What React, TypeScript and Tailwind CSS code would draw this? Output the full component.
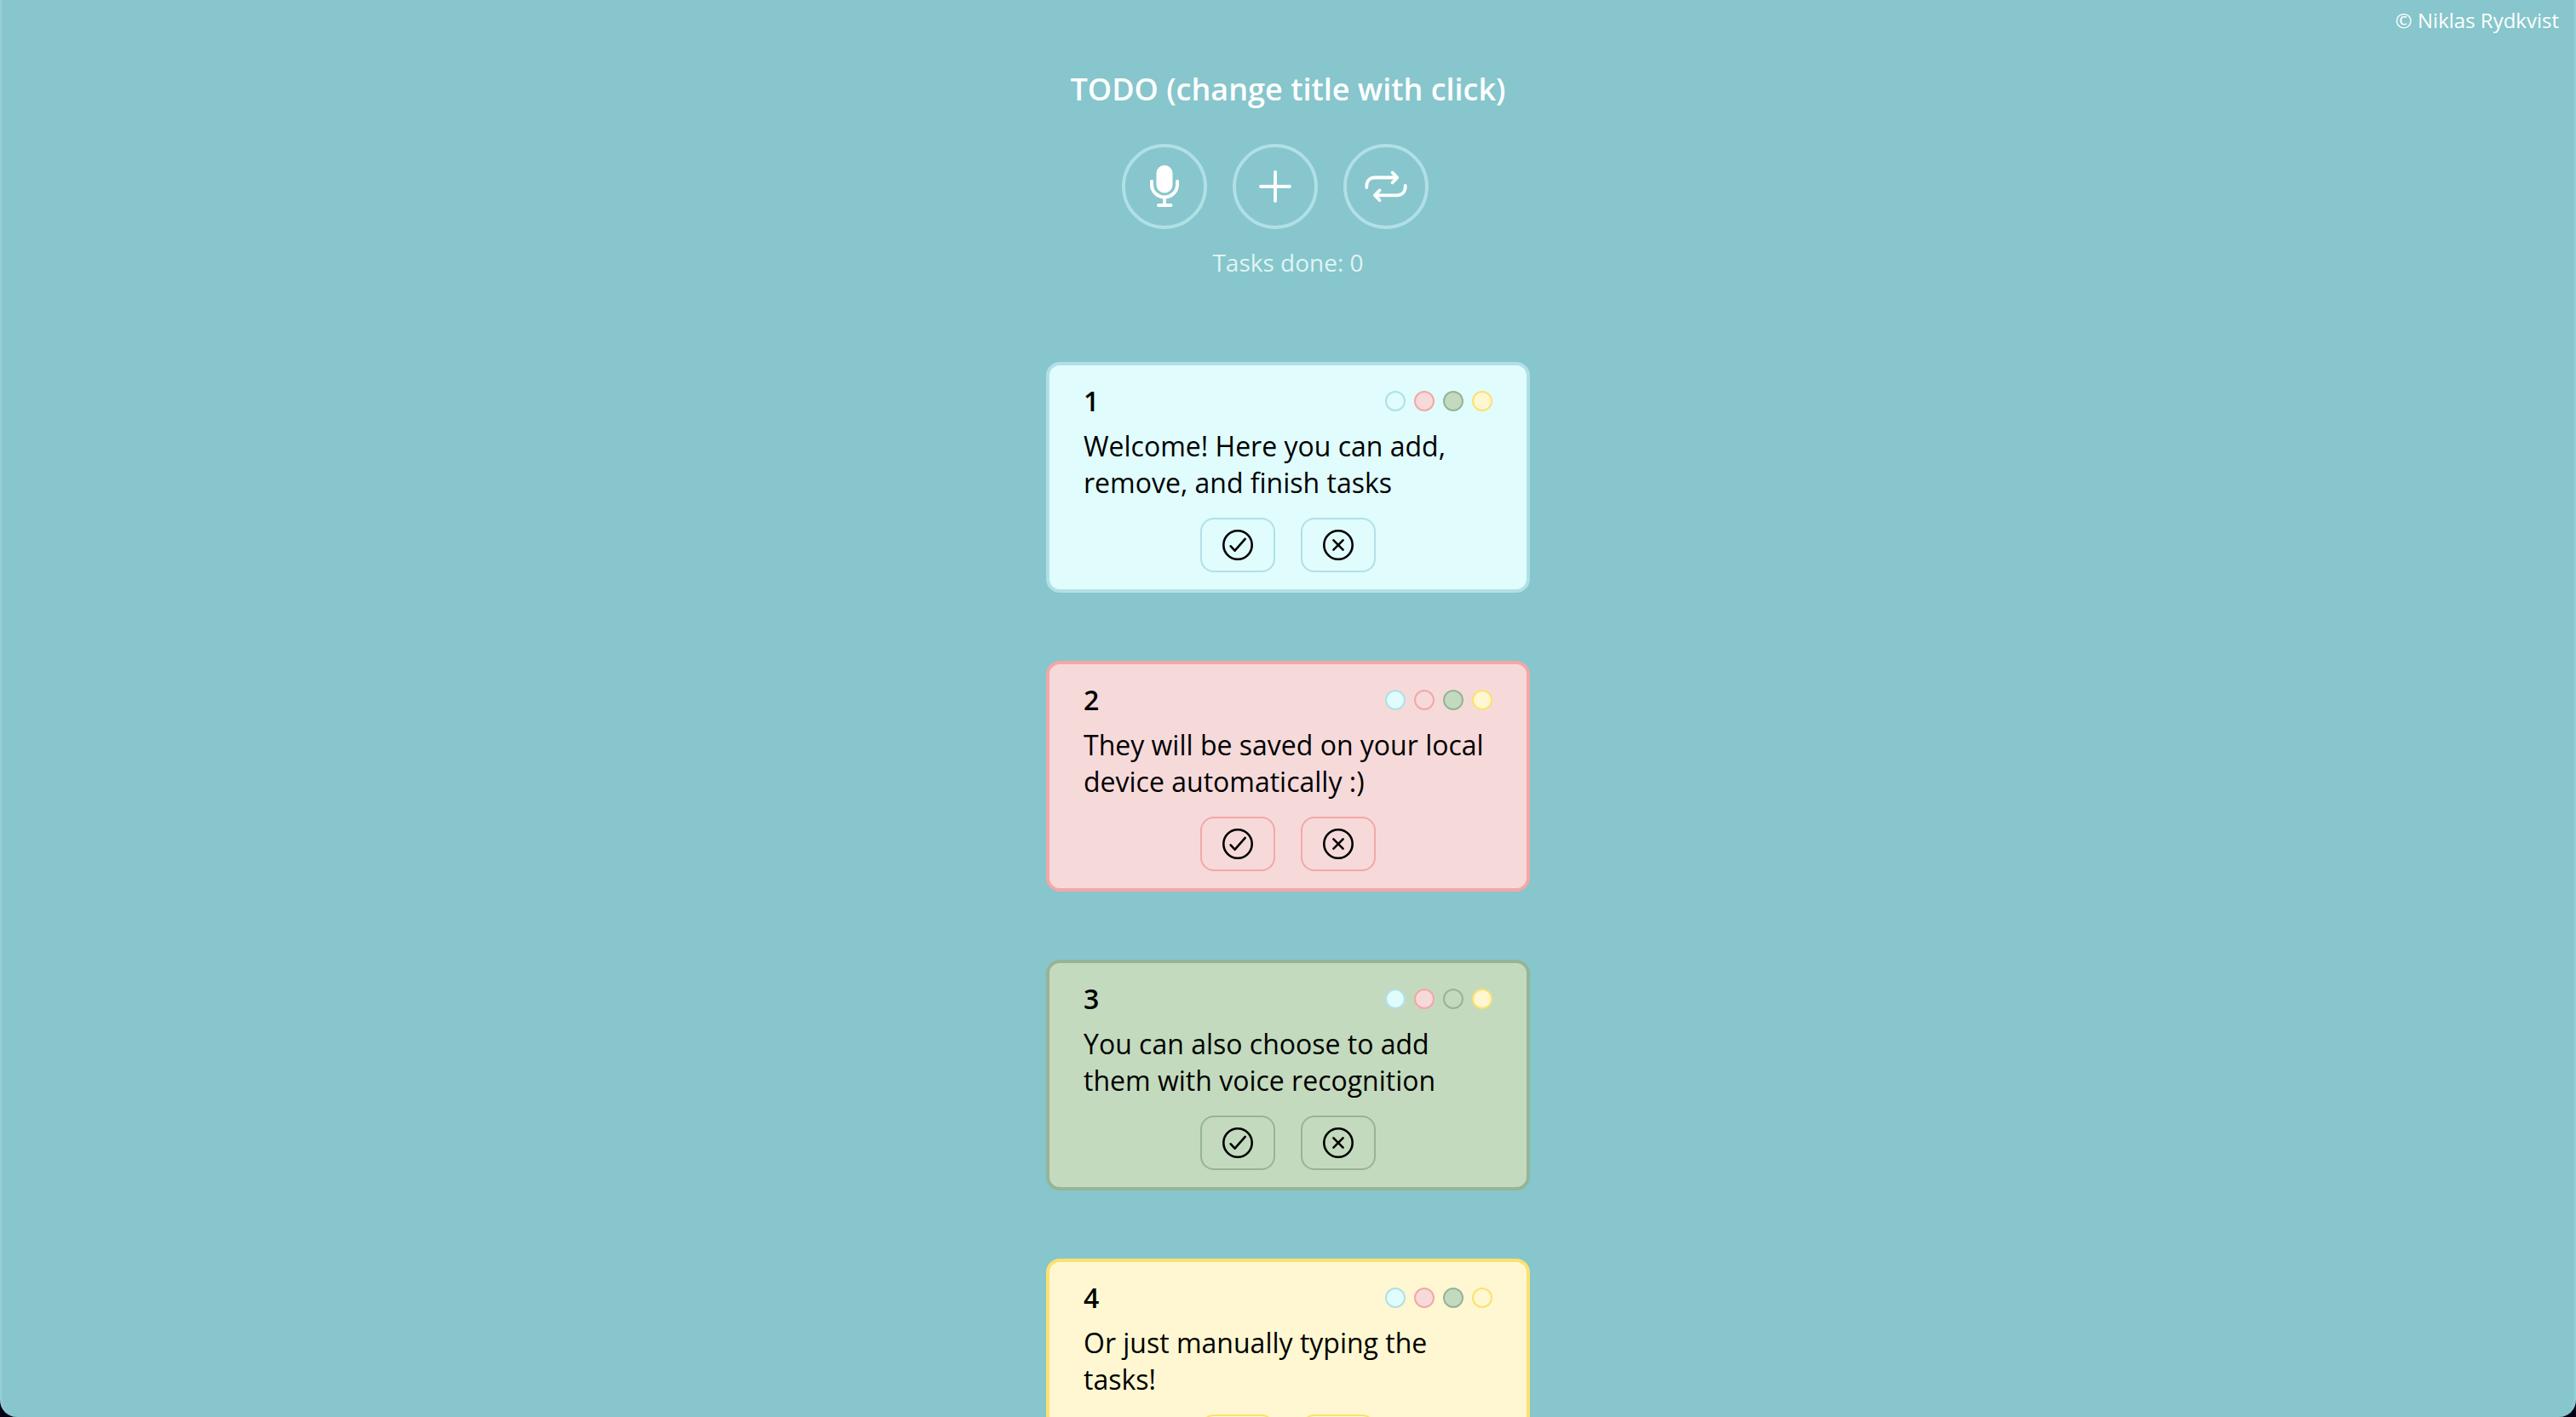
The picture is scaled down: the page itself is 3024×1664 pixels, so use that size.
import type { ReactNode } from 'react';

type Tone = 'blue' | 'red' | 'green' | 'yellow';

const fills: Record<Tone, string> = {
  blue: 'bg-[#e0fcfd]',
  red: 'bg-[#f6dada]',
  green: 'bg-[#c4dabe]',
  yellow: 'bg-[#fef7d1]',
};

const borders: Record<Tone, string> = {
  blue: 'border-[#b0e0e6]',
  red: 'border-[#f4a7a7]',
  green: 'border-[#96b497]',
  yellow: 'border-[#fce170]',
};

const tones: Tone[] = ['blue', 'red', 'green', 'yellow'];

const tasks: { tone: Tone; text: string }[] = [
  { tone: 'blue', text: 'Welcome! Here you can add, remove, and finish tasks' },
  { tone: 'red', text: 'They will be saved on your local device automatically :)' },
  { tone: 'green', text: 'You can also choose to add them with voice recognition' },
  { tone: 'yellow', text: 'Or just manually typing the tasks!' },
];

function MicIcon() {
  return (
    <svg viewBox="0 0 60 60" className="size-[60px]" fill="none" stroke="currentColor" strokeWidth="4" strokeLinecap="round">
      <rect x="20.5" y="5" width="19" height="32.5" rx="9.5" fill="currentColor" stroke="none" />
      <path d="M15 24v4a15 14.500 0 0 0 30 0v-4M30 42.500v9.500M23 52h14.500" />
    </svg>
  );
}

function PlusIcon() {
  return (
    <svg viewBox="0 0 60 60" className="size-[60px]" fill="none" stroke="currentColor" strokeWidth="3.8" strokeLinecap="round">
      <path d="M30 13v34M13 30h34" />
    </svg>
  );
}

function RepeatIcon() {
  return (
    <svg viewBox="0 0 60 60" className="size-[60px]" fill="none" stroke="currentColor" strokeWidth="3.8" strokeLinecap="round" strokeLinejoin="round">
      <path d="M7.300 31v-1.500c0-6 3.700-10 9.700-10h25.500M37.600 13.700l5.700 5.800-5.700 6" />
      <path d="M52.700 28.800v1.500c0 6-3.700 10-9.700 10H17.500M22.600 34.500l-5.700 5.800 5.700 5.900" />
    </svg>
  );
}

function CheckIcon() {
  return (
    <svg viewBox="0 0 40 40" className="size-10" fill="none" stroke="currentColor" strokeWidth="2.6" strokeLinecap="round" strokeLinejoin="round">
      <circle cx="20" cy="20" r="16.700" />
      <path d="M11.700 21.300l4.900 5.400L28.700 12.900" />
    </svg>
  );
}

function CloseIcon() {
  return (
    <svg viewBox="0 0 40 40" className="size-10" fill="none" stroke="currentColor" strokeWidth="2.6" strokeLinecap="round">
      <circle cx="20" cy="20" r="16.700" />
      <path d="M14.400 14.400l11.200 11.200M25.600 14.400l-11.200 11.200" />
    </svg>
  );
}

function RoundButton({ label, children }: { label: string; children: ReactNode }) {
  return (
    <button
      type="button"
      aria-label={label}
      className="mr-[30px] flex size-[100px] items-center justify-center rounded-full border-4 border-[#b0e0e6] text-white"
    >
      {children}
    </button>
  );
}

function TaskCard({ tone, text, number }: { tone: Tone; text: string; number: number }) {
  const action = `flex h-16 w-[88px] items-center justify-center rounded-2xl border-2 ${borders[tone]}`;
  return (
    <li className={`rounded-2xl border-4 px-10 py-5 text-[32px] leading-[43px] text-black ${fills[tone]} ${borders[tone]}`}>
      <div className="flex items-center justify-between">
        <h2 className="font-semibold">{number}</h2>
        <div className="flex gap-2.5">
          {tones.map((t) => (
            <button
              key={t}
              type="button"
              aria-label={`Make task ${number} ${t}`}
              className={`size-6 rounded-full border-2 ${fills[t]} ${borders[t]}`}
            />
          ))}
        </div>
      </div>
      <p className="mt-2.5">{text}</p>
      <div className="mt-5 flex justify-center gap-[30px]">
        <button type="button" aria-label={`Finish task ${number}`} className={action}>
          <CheckIcon />
        </button>
        <button type="button" aria-label={`Remove task ${number}`} className={action}>
          <CloseIcon />
        </button>
      </div>
    </li>
  );
}

export default function App() {
  return (
    <div className="h-screen bg-[#020214]">
      <div className="h-full overflow-hidden rounded-b-[20px] border-x-2 border-[#97ced3] bg-[#86c6cc] font-['Open_Sans',sans-serif]">
        <p className="pt-2 pr-[18px] text-right text-2xl leading-8 text-white">© Niklas Rydkvist</p>
        <header className="mt-10 flex flex-col items-center">
          <h1 className="text-4xl leading-[50px] font-semibold text-white">TODO (change title with click)</h1>
          <div className="mt-[39px] flex">
            <RoundButton label="Add task by voice">
              <MicIcon />
            </RoundButton>
            <RoundButton label="Add task">
              <PlusIcon />
            </RoundButton>
            <RoundButton label="Change layout">
              <RepeatIcon />
            </RoundButton>
          </div>
          <p className="mt-5 text-[28px] leading-[38px] text-[#e0f4f5]">Tasks done: 0</p>
        </header>
        <ul className="mx-auto mt-[98px] flex max-w-[568px] flex-col gap-20">
          {tasks.map((task, i) => (
            <TaskCard key={task.tone} number={i + 1} {...task} />
          ))}
        </ul>
      </div>
    </div>
  );
}
